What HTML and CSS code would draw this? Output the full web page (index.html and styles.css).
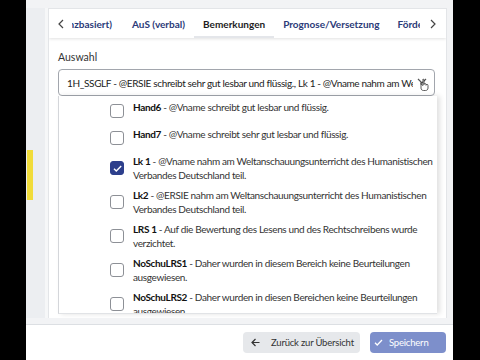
FILE: index.html
```html
<!DOCTYPE html>
<html lang="de">
<head>
  <meta charset="UTF-8">
  <title>Bemerkungen</title>
  <link rel="stylesheet" href="styles.css">
</head>
<body>
<div class="device">
  <div class="screen">
    <div class="page">
      <div class="rail"><span class="rail-mark"></span></div>
      <div class="card">
        <div class="tabbar">
          <span class="tab-arrow">
            <svg width="6" height="10" viewBox="0 0 6 10"><path d="M5 1 1 5l4 4" fill="none" stroke="#444" stroke-width="1.2"/></svg>
          </span>
          <div class="tabs">
            <span class="tab tab-cut"><span>AuS (kompetenzbasiert)</span></span>
            <span class="tab">AuS (verbal)</span>
            <span class="tab active">Bemerkungen</span>
            <span class="tab">Prognose/Versetzung</span>
            <span class="tab">Förderempfehlung</span>
          </div>
          <span class="tab-arrow">
            <svg width="6" height="10" viewBox="0 0 6 10"><path d="M1 1l4 4-4 4" fill="none" stroke="#444" stroke-width="1.2"/></svg>
          </span>
        </div>

        <div class="card-body">
          <div class="field-label">Auswahl</div>
          <div class="select">
            <span class="select-value">1H_SSGLF - @ERSIE schreibt sehr gut lesbar und flüssig., Lk 1 - @Vname nahm am Weltanschauungsunterricht</span>
            <svg class="select-icon" width="16" height="16" viewBox="0 0 16 16">
              <path d="M3 4l4 4 4-4" fill="none" stroke="#555" stroke-width="1.2"/>
              <path d="M6 7.5V13c0 1.5 1 2.5 2.5 2.5h2c1.5 0 2.5-1 2.5-2.5v-2.5c0-.8-.5-1.2-1-1.2s-1 .4-1 1V9.5c0-.7-.5-1-1-1s-1 .3-1 1V5c0-.6-.4-1-.9-1S8 4.4 8 5v5.5L7 9.8c-.5-.5-1-.5-1-.3z" fill="#fff" stroke="#333" stroke-width=".8"/>
            </svg>
          </div>

          <ul class="options">
            <li class="option">
              <span class="box"></span>
              <span class="option-text"><b>Hand6</b> - @Vname schreibt gut lesbar und flüssig.</span>
            </li>
            <li class="option">
              <span class="box"></span>
              <span class="option-text"><b>Hand7</b> - @Vname schreibt sehr gut lesbar und flüssig.</span>
            </li>
            <li class="option">
              <span class="box checked">
                <svg width="11" height="11" viewBox="0 0 11 11"><path d="M2 5.8l2.3 2.3L9.2 3" fill="none" stroke="#fff" stroke-width="1.4"/></svg>
              </span>
              <span class="option-text"><b>Lk 1</b> - @Vname nahm am Weltanschauungsunterricht des Humanistischen Verbandes Deutschland teil.</span>
            </li>
            <li class="option">
              <span class="box"></span>
              <span class="option-text"><b>Lk2</b> - @ERSIE nahm am Weltanschauungsunterricht des Humanistischen Verbandes Deutschland teil.</span>
            </li>
            <li class="option">
              <span class="box"></span>
              <span class="option-text"><b>LRS 1</b> - Auf die Bewertung des Lesens und des Rechtschreibens wurde verzichtet.</span>
            </li>
            <li class="option">
              <span class="box"></span>
              <span class="option-text"><b>NoSchuLRS1</b> - Daher wurden in diesem Bereich keine Beurteilungen ausgewiesen.</span>
            </li>
            <li class="option">
              <span class="box"></span>
              <span class="option-text"><b>NoSchuLRS2</b> - Daher wurden in diesen Bereichen keine Beurteilungen ausgewiesen.</span>
            </li>
          </ul>
        </div>
      </div>
    </div>

    <div class="footer">
      <button class="btn btn-back">
        <svg width="9" height="9" viewBox="0 0 9 9"><path d="M8.5 4.5H1M4.5 1 1 4.5 4.5 8" fill="none" stroke="#333" stroke-width="1.2"/></svg>
        Zurück zur Übersicht
      </button>
      <button class="btn btn-save">
        <svg width="9" height="9" viewBox="0 0 9 9"><path d="M1 4.8l2.2 2.2L8 2" fill="none" stroke="#fff" stroke-width="1.3"/></svg>
        Speichern
      </button>
    </div>
  </div>
</div>
</body>
</html>
```

FILE: styles.css
```css
* {
    box-sizing: border-box;
}

body {
    margin: 0;
    background: #000;
    font-family: Lato, "Noto Sans", sans-serif;
    color: #222;
}

.device {
    width: 480px;
    height: 360px;
    padding: 0 27px 0 26px;
    overflow: hidden;
}

.screen {
    height: 100%;
    background: #f2f3f5;
    display: flex;
    flex-direction: column;
}

/* Seite hinter dem Dialog */
.page {
    display: flex;
    padding: 8px 6px 0 0;
    height: 318px;
}

.rail {
    width: 22px;
    position: relative;
    background: #eceef1;
    border-right: 3px solid #f6f7f8;
}
.rail-mark {
    position: absolute;
    left: 1px;
    top: 142px;
    width: 6px;
    height: 50px;
    background: #f1dc3a;
}

.card {
    flex: 1;
    background: #fff;
    border: 1px solid #e3e5e8;
    border-bottom: none;
    display: flex;
    flex-direction: column;
    overflow: hidden;
}

/* Tabs */
.tabbar {
    height: 29px;
    display: flex;
    align-items: center;
    padding: 0 10px 0 9px;
    gap: 8px;
    box-shadow: 0 1px 3px rgba(0,0,0,0.12);
    position: relative;
}
.tab-arrow {
    display: flex;
    width: 6px;
}
.tab-arrow:last-child {
    margin-left: 2px;
}
.tabs {
    flex: 1;
    display: flex;
    overflow: hidden;
    height: 100%;
}
.tab {
    display: flex;
    align-items: center;
    padding: 0 9px;
    white-space: nowrap;
    font-size: 10px;
    font-weight: bold;
    color: #2b3a78;
}
.tab.active {
    color: #1d1d1d;
    box-shadow: inset 0 -2px 0 #e4e6ea;
}
.tab-cut {
    width: 51px;
    flex-shrink: 0;
    padding-left: 0;
    padding-right: 11px;
    overflow: hidden;
    justify-content: flex-end;
}

/* Inhalt */
.card-body {
    padding: 12px 11px 0 9px;
}
.field-label {
    font-size: 10.5px;
    line-height: 14px;
    color: #333;
    margin-bottom: 5px;
}

.select {
    height: 27px;
    border: 1px solid #a2a6ad;
    border-radius: 4px;
    display: flex;
    align-items: center;
    padding: 0 3px 0 8px;
    gap: 2px;
}
.select-value {
    flex: 1;
    font-size: 10px;
    letter-spacing: -0.35px;
    white-space: nowrap;
    overflow: hidden;
    color: #222;
}
.select-icon {
    flex-shrink: 0;
}

.options {
    list-style: none;
    margin: 0 -2px 0 0;
    padding: 0;
    height: 218px;
    overflow: hidden;
    border-left: 1px solid #d4d6da;
    border-bottom: 1px solid #e1e3e6;
    box-shadow: 3px 0 5px rgba(0,0,0,0.12);
}
.option {
    display: flex;
    align-items: center;
    min-height: 27px;
    padding: 4px 2px 2px 51px;
}
.box {
    width: 14px;
    height: 14px;
    flex-shrink: 0;
    border: 1px solid #8d9096;
    border-radius: 3px;
    margin-right: 9px;
    display: flex;
    align-items: center;
    justify-content: center;
}
.box.checked {
    background: #2d3f8c;
    border-color: #2d3f8c;
}
.option-text {
    align-self: flex-start;
    font-size: 10px;
    letter-spacing: -0.35px;
    line-height: 14px;
    color: #333;
}
.option-text b {
    color: #111;
}

/* Fußleiste */
.footer {
    flex: 1;
    margin-top: 6px;
    background: #fff;
    border-top: 1px solid #dcdfe3;
    display: flex;
    justify-content: flex-end;
    align-items: flex-start;
    gap: 10px;
    padding: 7px 7px 0 0;
}
.btn {
    height: 21px;
    border: none;
    border-radius: 4px;
    font-family: Lato, "Noto Sans", sans-serif;
    font-size: 9.5px;
    letter-spacing: -0.2px;
    white-space: nowrap;
    display: flex;
    align-items: center;
}
.btn-back {
    width: 117px;
    background: #e6e8eb;
    color: #333;
    padding: 0 0 0 8px;
    gap: 11px;
}
.btn-save {
    width: 76px;
    background: #7d8fcb;
    color: #fff;
    padding: 0 0 0 4px;
    gap: 6px;
}
```
